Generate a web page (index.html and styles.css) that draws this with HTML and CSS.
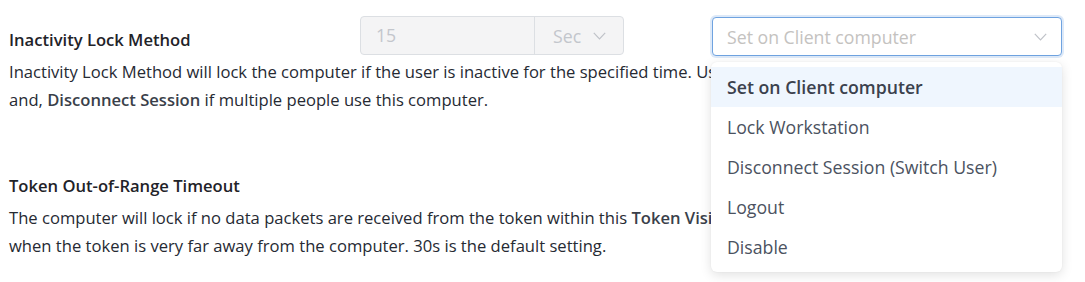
FILE: index.html
```html
<!DOCTYPE html>
<html lang="en">
<head>
<meta charset="utf-8">
<title>Lock settings</title>
<link rel="stylesheet" href="styles.css">
</head>
<body>
<div class="page">
  <section class="setting">
    <div class="setting-head">
      <h3 class="title">Inactivity Lock Method</h3>
      <div class="input-group">
        <div class="ig-value">15</div>
        <div class="ig-unit">Sec
          <svg class="chev" width="13" height="8" viewBox="0 0 13 8"><path d="M0.8 0.8 L6.5 6.8 L12.2 0.8" fill="none" stroke="currentColor" stroke-width="1.2"/></svg>
        </div>
      </div>
      <div class="select-wrap">
        <div class="select">
          <span class="placeholder">Set on Client computer</span>
          <svg class="chev" width="13" height="8" viewBox="0 0 13 8"><path d="M0.8 0.8 L6.5 6.8 L12.2 0.8" fill="none" stroke="currentColor" stroke-width="1.2"/></svg>
        </div>
        <ul class="menu">
          <li class="item active">Set on Client computer</li>
          <li class="item">Lock Workstation</li>
          <li class="item">Disconnect Session (Switch User)</li>
          <li class="item">Logout</li>
          <li class="item">Disable</li>
        </ul>
      </div>
    </div>
    <p class="desc">Inactivity Lock Method will lock the computer if the user is inactive for the specified time. Use<br>and, <b>Disconnect Session</b> if multiple people use this computer.</p>
  </section>
  <section class="setting second">
    <div class="setting-head">
      <h3 class="title">Token Out-of-Range Timeout</h3>
    </div>
    <p class="desc">The computer will lock if no data packets are received from the token within this <b>Token Visibility</b><br>when the token is very far away from the computer. 30s is the default setting.</p>
  </section>
</div>
</body>
</html>
```
FILE: styles.css
```css
* { box-sizing: border-box; }
html { overflow: hidden; }
body {
  margin: 0;
  min-height: 282px;
  background: #fff;
  font-family: "Open Sans", "Noto Sans", sans-serif;
  font-size: 16.6px;
  color: #262a33;
}
.page {
  padding: 16px 23px 0 9px;
  width: 1085px;
}
.setting-head {
  display: flex;
  align-items: flex-start;
  height: 40px;
}
.title {
  margin: 0;
  width: 351px;
  padding-top: 12px;
  font-size: 16.6px;
  line-height: 24px;
  font-weight: 600;
  color: #1f2329;
  white-space: nowrap;
}
.input-group {
  display: flex;
  width: 264px;
  height: 39px;
  border: 1px solid #dcdfe3;
  border-radius: 4px;
  background: #f4f4f5;
  color: #c3c6cc;
  font-size: 17.7px;
}
.ig-value {
  width: 174px;
  padding-left: 15px;
  line-height: 37px;
  border-right: 1px solid #dcdfe3;
}
.ig-unit {
  flex: 1;
  display: flex;
  align-items: center;
  padding-left: 18px;
  gap: 12px;
}
.chev { display: block; color: #bfc2c8; }
.select-wrap {
  position: relative;
  margin-left: 88px;
  width: 350px;
  margin-top: 1px;
}
.select {
  height: 39px;
  border: 1px solid #6fa3e0;
  border-radius: 4px;
  box-shadow: 0 0 0 2px #dde9f8;
  display: flex;
  align-items: center;
  justify-content: space-between;
  padding: 0 14px 0 14px;
  background: #fff;
  font-size: 17.7px;
}
.placeholder { color: #c4c2c0; white-space: nowrap; }
.menu {
  position: absolute;
  top: 45px;
  left: -1px;
  width: 351px;
  margin: 0;
  padding: 5px 0;
  list-style: none;
  background: #fff;
  border-radius: 6px;
  box-shadow: 0 3px 12px rgba(0, 0, 0, 0.12), 0 0 2px rgba(0, 0, 0, 0.06);
  z-index: 5;
  font-size: 17.7px;
}
.item {
  height: 40px;
  line-height: 40px;
  padding-left: 16px;
  color: #4b5260;
  white-space: nowrap;
}
.item.active {
  background: #eff6fe;
  font-weight: 600;
  color: #3b414d;
}
.desc {
  margin: 2px 0 0;
  line-height: 28px;
  color: #262a33;
  white-space: nowrap;
}
.desc b { font-weight: 600; color: #3a3f4a; }
.setting.second { margin-top: 48px; }
```
